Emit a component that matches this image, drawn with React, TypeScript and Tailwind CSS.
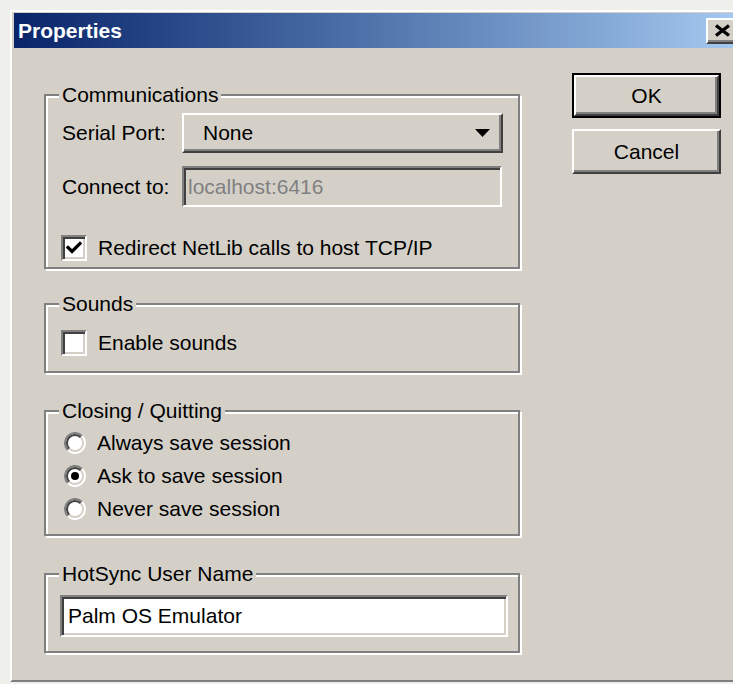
import React from 'react';

// classic 3D bevels
const raised =
  'border-2 border-t-white border-l-white border-r-[#404040] border-b-[#404040] shadow-[inset_-2px_-2px_0_#808080]';
const sunken =
  'border-2 border-t-[#808080] border-l-[#808080] border-r-white border-b-white shadow-[inset_2px_2px_0_#404040,inset_-2px_-2px_0_#d4d0c8]';

function GroupBox({
  title,
  className,
  children,
}: {
  title: string;
  className?: string;
  children?: React.ReactNode;
}) {
  return (
    <div className={`border-2 border-[#808080] shadow-[inset_2px_2px_0_#ffffff,2px_2px_0_#ffffff] ${className ?? ''}`}>
      <div className="-mt-[15px] ml-[13px] h-[28px] w-fit bg-[#d4d0c8] px-[3px] leading-[28px]">{title}</div>
      {children}
    </div>
  );
}

function CheckBox({ checked }: { checked?: boolean }) {
  return (
    <div className={`flex h-[26px] w-[26px] shrink-0 items-center justify-center bg-white ${sunken}`}>
      {checked && (
        <svg width="16" height="14" viewBox="0 0 16 14">
          <path d="M2 6.5 L6 10.5 L14 2.5" fill="none" stroke="#000" strokeWidth="3.2" strokeLinecap="square" />
        </svg>
      )}
    </div>
  );
}

function Radio({ checked }: { checked?: boolean }) {
  return (
    <svg width="22" height="22" viewBox="0 0 22 22" className="shrink-0">
      <circle cx="11" cy="11" r="10" fill="#ffffff" />
      <path d="M3.9 18.1 A10 10 0 0 1 18.1 3.9" fill="none" stroke="#808080" strokeWidth="2" />
      <path d="M18.1 3.9 A10 10 0 0 1 3.9 18.1" fill="none" stroke="#ffffff" strokeWidth="2" />
      <path d="M5.3 16.7 A8 8 0 0 1 16.7 5.3" fill="none" stroke="#404040" strokeWidth="2" />
      <path d="M16.7 5.3 A8 8 0 0 1 5.3 16.7" fill="none" stroke="#d4d0c8" strokeWidth="2" />
      {checked && <circle cx="11" cy="11" r="4" fill="#000" />}
    </svg>
  );
}

export default function App() {
  return (
    <div className="h-[684px] w-[733px] overflow-hidden bg-[#efefec] pl-[10px] pt-[10px] font-['Liberation_Sans',Arial,sans-serif] text-[21px] text-black">
      <div className="h-[672px] w-[732px] border-b-2 border-l-2 border-t-2 border-b-[#808080] border-l-white border-t-white bg-[#d4d0c8] pl-[2px] pt-px">
        {/* title bar */}
        <div className="flex h-[35px] items-center bg-linear-to-r from-[#0a246a] to-[#a6caf0] pl-[4px]">
          <span className="text-[21px] font-bold text-white">Properties</span>
          <div className={`ml-auto mr-[5px] flex h-[26px] w-[31px] items-center justify-center bg-[#d4d0c8] ${raised}`}>
            <svg width="17" height="13" viewBox="0 0 17 13" className="ml-[1px]">
              <path d="M2 1.5 L15 11.5 M15 1.5 L2 11.5" stroke="#000" strokeWidth="3.4" />
            </svg>
          </div>
        </div>

        <div className="flex pl-[30px] pt-[25px]">
          <div className="w-[476px] pt-[21px]">
            <GroupBox title="Communications" className="h-[175px]">
              <div className="mt-[4px] flex h-[40px] items-center">
                <span className="w-[136px] pl-[16px]">Serial Port:</span>
                <div className={`flex h-[40px] w-[321px] items-center bg-[#d4d0c8] pl-[19px] pr-[11px] ${raised}`}>
                  <span>None</span>
                  <svg width="15" height="8" viewBox="0 0 15 8" className="ml-auto">
                    <path d="M0 0 H15 L7.5 8 Z" fill="#000" />
                  </svg>
                </div>
              </div>
              <div className="mt-[13px] flex h-[41px] items-center">
                <span className="w-[136px] pl-[16px]">Connect to:</span>
                <div className={`flex h-[41px] w-[320px] items-center bg-[#d4d0c8] pl-[4px] text-[#808080] ${sunken}`}>
                  localhost:6416
                </div>
              </div>
              <div className="mt-[25px] flex items-center pl-[15px]">
                <CheckBox checked />
                <span className="ml-[11px]">Redirect NetLib calls to host TCP/IP</span>
              </div>
            </GroupBox>

            <GroupBox title="Sounds" className="mt-[34px] h-[70px]">
              <div className="mt-[9px] flex items-center pl-[15px]">
                <CheckBox />
                <span className="ml-[11px]">Enable sounds</span>
              </div>
            </GroupBox>

            <GroupBox title="Closing / Quitting" className="mt-[37px] h-[126px]">
              <div className="mt-[2px] flex flex-col gap-[1px] pl-[18px]">
                {[
                  ['Always save session', false],
                  ['Ask to save session', true],
                  ['Never save session', false],
                ].map(([label, on]) => (
                  <div key={label as string} className="flex h-[32px] items-center">
                    <Radio checked={on as boolean} />
                    <span className="ml-[11px]">{label}</span>
                  </div>
                ))}
              </div>
            </GroupBox>

            <GroupBox title="HotSync User Name" className="mt-[37px] h-[80px]">
              <div className={`ml-[14px] mt-[7px] flex h-[42px] w-[448px] items-center bg-white pl-[6px] ${sunken}`}>
                Palm OS Emulator
              </div>
            </GroupBox>
          </div>

          <div className="ml-[52px]">
            <div className="h-[45px] w-[149px] border-2 border-black">
              <div className={`flex h-full w-full items-center justify-center bg-[#d4d0c8] ${raised}`}>OK</div>
            </div>
            <div className={`mt-[11px] flex h-[45px] w-[149px] items-center justify-center bg-[#d4d0c8] ${raised}`}>
              Cancel
            </div>
          </div>
        </div>
      </div>
    </div>
  );
}
